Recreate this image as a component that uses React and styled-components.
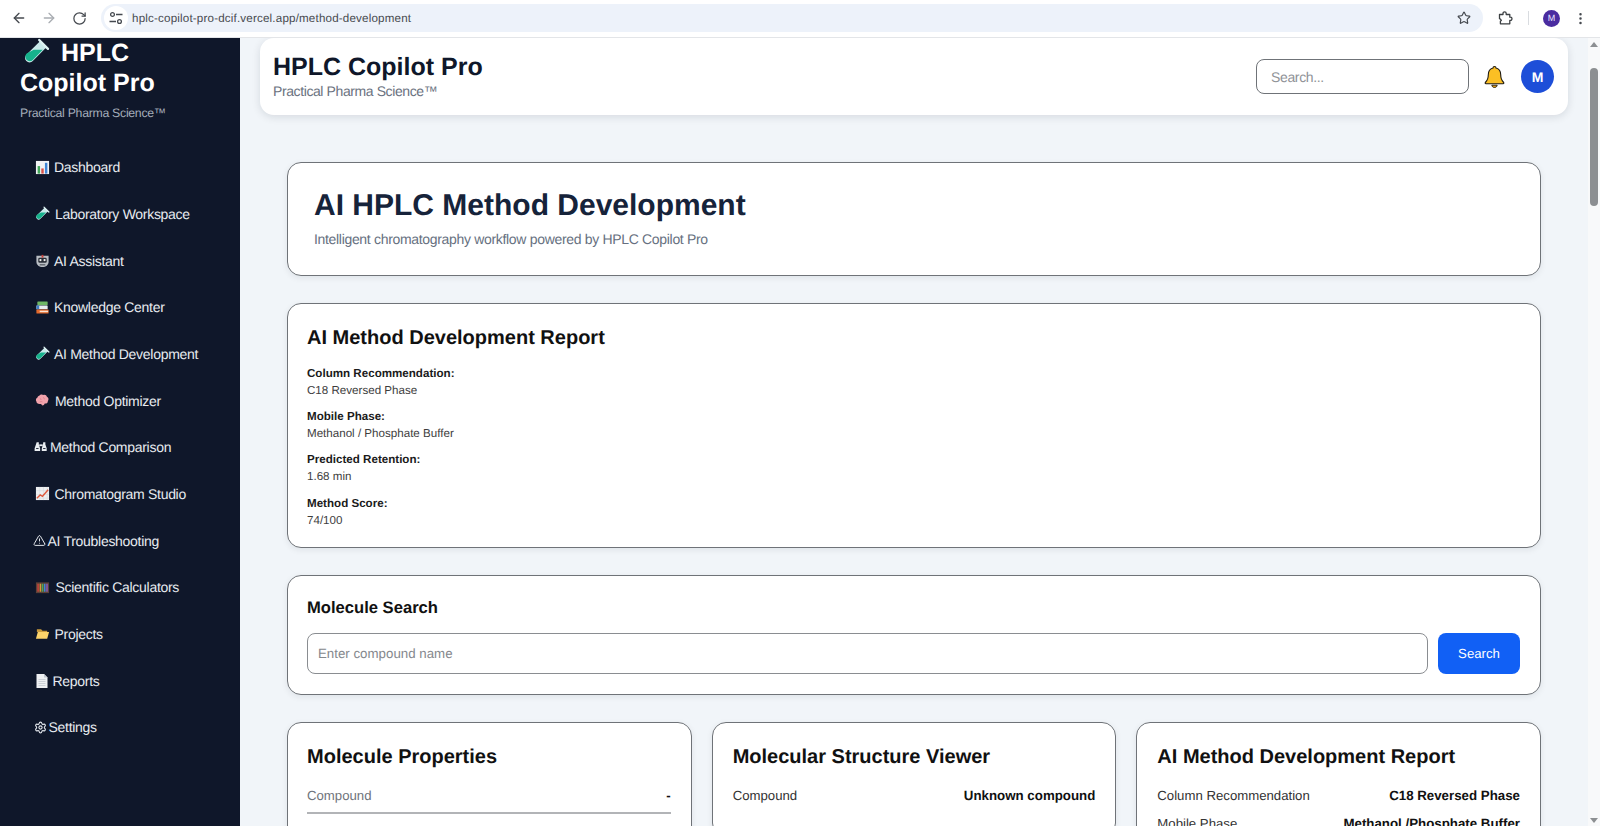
import React from "react";
import styled, { createGlobalStyle } from "styled-components";
import { ArrowLeft, ArrowRight, RotateCw, Star, EllipsisVertical, TriangleAlert, Settings } from "lucide-react";

const GlobalStyle = createGlobalStyle`
  html, body { margin: 0; padding: 0; height: 100%; overflow: hidden; background: #f1f5f9; }
  * { box-sizing: border-box; }
  body, input, button { font-family: "Liberation Sans", Arial, sans-serif; text-rendering: geometricPrecision; }
`;

const Page = styled.div`
  width: 1600px;
  height: 826px;
  display: flex;
  flex-direction: column;
  overflow: hidden;
`;

/* browser toolbar */
const Toolbar = styled.div`
  height: 38px;
  flex: none;
  background: #fff;
  border-bottom: 1px solid #e3e5e8;
  display: flex;
  align-items: center;
  padding: 0 0 1px 4px;
  color: #45494f;
`;
const ToolBtn = styled.div`
  width: ${(p) => p.$w || 30}px;
  display: flex;
  justify-content: center;
  align-items: center;
  color: ${(p) => (p.$faded ? "#a9adb2" : "#45494f")};
`;
const UrlPill = styled.div`
  width: 1382px;
  height: 28px;
  margin-left: 7px;
  margin-right: 7px;
  border-radius: 14px;
  background: #edf2fa;
  display: flex;
  align-items: center;
  padding: 0 12px 0 3px;
`;
const TuneWrap = styled.div`
  width: 24px;
  height: 24px;
  border-radius: 50%;
  background: #fff;
  display: flex;
  align-items: center;
  justify-content: center;
`;
const UrlText = styled.div`
  margin-left: 4px;
  font-size: 11.6px;
  letter-spacing: 0.18px;
  color: #474a4f;
  flex: 1;
`;
const ToolDivider = styled.div`
  width: 1px;
  height: 14px;
  background: #d9dce0;
  margin: 0 11px 0 8px;
`;
const ChromeAvatar = styled.div`
  width: 17px;
  height: 17px;
  border-radius: 50%;
  background: #4a2ca0;
  color: #e9e2ff;
  font-size: 9px;
  display: flex;
  align-items: center;
  justify-content: center;
  margin: 0 5px 0 3px;
`;

const Body = styled.div`
  flex: 1;
  min-height: 0;
  display: flex;
`;

/* left nav */
const Sidebar = styled.aside`
  width: 240px;
  flex: none;
  background: #0f172a;
  color: #fff;
  overflow: hidden;
`;
const Brand = styled.div`
  padding: 0 20px;
  font-size: 25px;
  line-height: 30px;
  font-weight: 700;
`;
const BrandTube = styled.svg`
  width: 27px;
  height: 27px;
  margin: 0 11px 0 3px;
  vertical-align: -4px;
`;
const BrandSub = styled.div`
  padding: 7px 20px 0;
  font-size: 12.3px;
  letter-spacing: -0.29px;
  line-height: 16px;
  color: #a3acb9;
`;
const NavList = styled.nav`
  padding-top: 23px;
`;
const NavItem = styled.div`
  height: 46.67px;
  display: flex;
  align-items: center;
  padding-left: ${(p) => p.$left}px;
  font-size: 14px;
  letter-spacing: -0.29px;
  color: #e7ebf0;
`;
const NavIcon = styled.span`
  width: ${(p) => p.$w}px;
  flex: none;
  display: flex;
  align-items: center;
`;

const Svg = ({ children, size = 15 }) => (
  <svg width={size} height={size} viewBox="0 0 16 16">{children}</svg>
);

const tube = (
  <>
    <path d="M10.2 1.6l4.2 4.2-1.1.3-7.5 7.6a2.6 2.6 0 0 1-3.8-3.8l7.6-7.5z" fill="#c9e9ea" />
    <path d="M6.3 6.9h5.4L5.8 13a2.6 2.6 0 0 1-3.6-3.8z" fill="#16b28c" />
    <path d="M9.6 1.2l5.2 5.2" stroke="#dff3f3" strokeWidth="1.4" strokeLinecap="round" />
  </>
);

const icons = {
  chart: (
    <Svg>
      <rect x="1" y="1" width="14" height="14" fill="#f2f4f5" />
      <rect x="2.8" y="6.5" width="2.6" height="8" fill="#43a85a" />
      <rect x="6.7" y="9" width="2.6" height="5.5" fill="#d9534a" />
      <rect x="10.6" y="3" width="2.6" height="11.5" fill="#3f86d6" />
    </Svg>
  ),
  tube: <Svg>{tube}</Svg>,
  robot: (
    <Svg>
      <path d="M1.5 3h13v6.5c0 3-3 5.5-6.5 5.5s-6.5-2.5-6.5-5.5z" fill="#b9bec4" />
      <rect x="3.5" y="5" width="9" height="5.5" rx="1.5" fill="#2a2f38" />
      <circle cx="5.8" cy="7.5" r="1.2" fill="#f3f3f3" />
      <circle cx="10.2" cy="7.5" r="1.2" fill="#f3f3f3" />
      <rect x="7" y="2" width="2" height="3" fill="#c8443c" />
      <rect x="5" y="12" width="6" height="1.2" fill="#4d535c" />
    </Svg>
  ),
  books: (
    <Svg>
      <rect x="2.5" y="1.5" width="11" height="4" rx="0.6" fill="#6fb765" />
      <rect x="1.5" y="5.8" width="12" height="4" rx="0.6" fill="#e8edf0" />
      <rect x="1.5" y="5.8" width="3" height="4" fill="#3f7fc4" />
      <rect x="1.5" y="10.2" width="13" height="4.3" rx="0.6" fill="#e36a2c" />
      <rect x="5" y="11.4" width="9" height="1.6" fill="#f7e4d5" />
    </Svg>
  ),
  brain: (
    <Svg>
      <path d="M4.5 3c1-1.6 3.2-1.8 4.4-.9 1.8-.6 3.5.5 3.8 2 1.7.7 2.3 3 1 4.6.1 1.8-1.7 3-3.3 2.5-.5 1.3-1.5 2.3-2.5 2.1-.5-1-1.5-1.7-2.7-1.6C3 11.8 1.5 10.5 1.5 9 .5 7.5 1 5.5 2.5 5 2.7 4 3.5 3.2 4.5 3z" fill="#f2a3ac" />
      <path d="M5 5.5c1 .3 1.5 1 1.5 2M9 4.5c0 1 .6 1.7 1.5 2M5 9.5c1-.5 2-.5 3 0" stroke="#d97c88" strokeWidth=".8" fill="none" />
    </Svg>
  ),
  compare: (
    <Svg size={14}>
      <path d="M3 2.5h2.5V5L7 9.5v3H.7v-3L2.2 5z" fill="#e9edf1" />
      <path d="M10.5 2.5H13V5l1.500 4.500v3H8.900v-3L10.300 5z" fill="#e9edf1" />
      <rect x="6" y="5" width="4" height="2" fill="#e9edf1" />
      <rect x="2.4" y="9.3" width="2.8" height="1" fill="#0f172a" />
      <rect x="10.4" y="9.3" width="2.8" height="1" fill="#0f172a" />
    </Svg>
  ),
  line: (
    <Svg>
      <rect x="1" y="1" width="14" height="14" fill="#eef0f1" />
      <path d="M1 5h14M1 9h14M1 13h14M5 1v14M9 1v14M13 1v14" stroke="#cfd4d8" strokeWidth=".5" />
      <path d="M2 13l3.5-3.5 2.5 1.5L14 4" stroke="#de5a3e" strokeWidth="1.5" fill="none" />
    </Svg>
  ),
  warn: <TriangleAlert size={13} strokeWidth={1.8} color="#e7ebf0" />,
  abacus: (
    <Svg>
      <rect x="1" y="2.5" width="14" height="11.5" fill="#5c4238" />
      <rect x="2.5" y="4" width="1.6" height="8.5" fill="#c8443c" />
      <rect x="5" y="4" width="1.6" height="8.5" fill="#d79a3a" />
      <rect x="7.3" y="4" width="1.6" height="8.5" fill="#4aa65a" />
      <rect x="9.6" y="4" width="1.6" height="8.5" fill="#3f86d6" />
      <rect x="12" y="4" width="1.6" height="8.5" fill="#8a5bb8" />
    </Svg>
  ),
  folder: (
    <Svg>
      <path d="M2 3.5h4.5L8 5h5v1.5H2z" fill="#c99a3c" />
      <path d="M3 6.5h12L13 13.500H1z" fill="#fbd26a" />
    </Svg>
  ),
  page: (
    <Svg size={16}>
      <path d="M2.5 1H10l3.5 3.5V15h-11z" fill="#eef0f2" />
      <path d="M10 1v3.5h3.5z" fill="#c3c9cf" />
      <path d="M4.5 6.5h7M4.5 8.5h7M4.5 10.500h7M4.500 12.500h7" stroke="#c3c9cf" strokeWidth=".8" />
    </Svg>
  ),
  gear: <Settings size={13} strokeWidth={2} color="#e7ebf0" />,
};

const navItems = [
  ["chart", "Dashboard", 35, 19],
  ["tube", "Laboratory Workspace", 35, 20],
  ["robot", "AI Assistant", 35, 19],
  ["books", "Knowledge Center", 35, 19],
  ["tube", "AI Method Development", 35, 19],
  ["brain", "Method Optimizer", 35, 20],
  ["compare", "Method Comparison", 34, 16],
  ["line", "Chromatogram Studio", 35, 19.5],
  ["warn", "AI Troubleshooting", 33, 14.5],
  ["abacus", "Scientific Calculators", 35, 20.5],
  ["folder", "Projects", 35, 19.5],
  ["page", "Reports", 34, 18.5],
  ["gear", "Settings", 34, 14.5],
];

/* main area */
const Main = styled.main`
  flex: 1;
  min-width: 0;
  overflow: hidden;
`;
const TopBar = styled.header`
  margin: 0 20px;
  height: 77px;
  background: #fff;
  border-radius: 14px;
  box-shadow: 0 2px 8px rgba(15, 23, 42, 0.12);
  display: flex;
  align-items: center;
  padding: 0 14px 0 13px;
`;
const TopTitle = styled.div`
  flex: 1;
  padding-bottom: 1px;
`;
const TopName = styled.div`
  font-size: 25px;
  line-height: 29px;
  font-weight: 700;
  color: #0f172a;
`;
const TopSub = styled.div`
  font-size: 14px;
  letter-spacing: -0.4px;
  line-height: 18px;
  color: #6b7280;
`;
const TopSearch = styled.input`
  width: 213px;
  height: 35px;
  border: 1px solid #6f7378;
  border-radius: 8px;
  padding: 0 14px;
  font-size: 14px;
  letter-spacing: -0.35px;
  background: #fff;
  &::placeholder { color: #8f9297; opacity: 1; }
`;
const BellWrap = styled.div`
  margin: 0 16px 0 15px;
  display: flex;
`;
const Avatar = styled.div`
  width: 33px;
  height: 33px;
  border-radius: 50%;
  background: #1d4ed8;
  color: #fff;
  font-size: 14px;
  font-weight: 700;
  display: flex;
  align-items: center;
  justify-content: center;
`;
const Content = styled.div`
  padding: 47px 47px;
  display: flex;
  flex-direction: column;
  gap: 27px;
`;
const Card = styled.section`
  background: #fff;
  border: 1px solid #6f7378;
  border-radius: 14px;
  box-shadow: 0 2px 6px rgba(15, 23, 42, 0.08);
  padding: ${(p) => p.$pad || "20px"};
`;
const HeroTitle = styled.h1`
  margin: 0;
  font-size: 30px;
  line-height: 36px;
  font-weight: 700;
  color: #16233a;
`;
const HeroSub = styled.p`
  margin: 6px 0 0;
  font-size: 14px;
  letter-spacing: -0.32px;
  line-height: 18px;
  color: #667080;
`;
const CardTitle = styled.h2`
  margin: 0;
  font-size: 20px;
  line-height: 24px;
  font-weight: 700;
  color: #111;
`;
const ReportList = styled.div`
  margin-top: 15px;
  display: flex;
  flex-direction: column;
  gap: 9.2px;
`;
const ReportLabel = styled.div`
  font-size: 11.6px;
  line-height: 17px;
  font-weight: 700;
  color: #1b1b1b;
`;
const ReportValue = styled.div`
  font-size: 11.6px;
  line-height: 17px;
  color: #3d3d3d;
`;
const SearchTitle = styled.h3`
  margin: 0;
  font-size: 16.6px;
  line-height: 22px;
  font-weight: 700;
  color: #111;
`;
const SearchRow = styled.div`
  margin-top: 14px;
  display: flex;
  gap: 10px;
`;
const SearchInput = styled.input`
  flex: 1;
  height: 41px;
  border: 1px solid #8a8d91;
  border-radius: 8px;
  padding: 0 10px;
  font-size: 13.3px;
  &::placeholder { color: #85888d; opacity: 1; }
`;
const SearchButton = styled.button`
  width: 82px;
  height: 41px;
  border: none;
  border-radius: 8px;
  background: #1160f5;
  color: #fff;
  font-size: 13.2px;
`;
const Columns = styled.div`
  display: grid;
  grid-template-columns: repeat(3, 1fr);
  gap: 20px;
  align-items: start;
`;
const Rows = styled.div`
  margin-top: 18px;
`;
const Row = styled.div`
  display: flex;
  justify-content: space-between;
  font-size: 13.2px;
  line-height: 17px;
  padding-bottom: ${(p) => (p.$ruled ? 8 : 11)}px;
  margin-bottom: ${(p) => (p.$ruled ? 9 : 0)}px;
  border-bottom: ${(p) => (p.$ruled ? "2px solid #b2b4b7" : "none")};
  color: ${(p) => (p.$muted ? "#6f747b" : "#333")};
  b { color: #111; font-size: 13.3px; }
`;

/* page scrollbar */
const ScrollTrack = styled.div`
  width: 12px;
  flex: none;
  background: #f8f9fa;
  display: flex;
  flex-direction: column;
  align-items: center;
  padding: 4px 0 3px 0;
`;
const ScrollThumb = styled.div`
  width: 8px;
  height: 138px;
  margin-top: 21px;
  margin-bottom: auto;
  border-radius: 4px;
  background: #8c8f92;
`;
const ScrollArrow = styled.div`
  width: 0;
  height: 0;
  border-left: 4px solid transparent;
  border-right: 4px solid transparent;
  ${(p) => (p.$down ? "border-top: 5px solid #8c8f92;" : "border-bottom: 5px solid #8c8f92;")}
`;

const Bell = () => (
  <svg width="21" height="24" viewBox="0 0 21 24">
    <path d="M10.5 1.5c.9 0 1.5.6 1.5 1.5 3.2.8 4.7 3.5 4.7 6.8 0 3.5.8 5.6 3 7.7.4.5.1 1.2-.6 1.2H1.9c-.7 0-1-.7-.6-1.2 2.2-2.1 3-4.2 3-7.7C4.3 6.5 5.8 3.8 9 3c0-.9.6-1.5 1.5-1.5z" fill="#fbbf24" stroke="#1f1a10" strokeWidth="1.1" />
    <path d="M7.8 20.2h5.4c-.2 1.4-1.3 2.3-2.7 2.3s-2.5-.9-2.7-2.3z" fill="#e39b12" stroke="#1f1a10" strokeWidth=".9" />
  </svg>
);

const TuneIcon = () => (
  <svg width="16" height="16" viewBox="0 0 16 16" fill="none" stroke="#45494f" strokeWidth="1.3">
    <circle cx="4.5" cy="4.5" r="1.9" />
    <path d="M8 4.5h6.5M1.5 11.5H8" />
    <circle cx="11.5" cy="11.5" r="1.9" />
  </svg>
);

const ExtensionIcon = () => (
  <svg width="16" height="16" viewBox="0 0 16 16" fill="none" stroke="#3c4043" strokeWidth="1.3" strokeLinejoin="round">
    <path d="M2.5 4.5H6V3.4a1.6 1.6 0 0 1 3.2 0v1.100h3.600v2.700h.6a1.600 1.600 0 0 1 0 3.200h-.6v3.400H3.400v-2.600l1-.9-1-1.200-.9-.4z" />
  </svg>
);

const reportItems = [
  ["Column Recommendation:", "C18 Reversed Phase"],
  ["Mobile Phase:", "Methanol / Phosphate Buffer"],
  ["Predicted Retention:", "1.68 min"],
  ["Method Score:", "74/100"],
];

export default function App() {
  return (
    <Page>
      <GlobalStyle />
      <Toolbar>
        <ToolBtn><ArrowLeft size={16} /></ToolBtn>
        <ToolBtn $faded><ArrowRight size={16} /></ToolBtn>
        <ToolBtn><RotateCw size={15} /></ToolBtn>
        <UrlPill>
          <TuneWrap><TuneIcon /></TuneWrap>
          <UrlText>hplc-copilot-pro-dcif.vercel.app/method-development</UrlText>
          <Star size={14} />
        </UrlPill>
        <ToolBtn $w={30}><ExtensionIcon /></ToolBtn>
        <ToolDivider />
        <ChromeAvatar>M</ChromeAvatar>
        <ToolBtn $w={30}><EllipsisVertical size={15} /></ToolBtn>
      </Toolbar>
      <Body>
        <Sidebar>
          <Brand>
            <BrandTube viewBox="0 0 16 16">{tube}</BrandTube>
            HPLC<br />Copilot Pro
          </Brand>
          <BrandSub>Practical Pharma Science™</BrandSub>
          <NavList>
            {navItems.map(([icon, label, left, w]) => (
              <NavItem key={label} $left={left}>
                <NavIcon $w={w}>{icons[icon]}</NavIcon>
                {label}
              </NavItem>
            ))}
          </NavList>
        </Sidebar>
        <Main>
          <TopBar>
            <TopTitle>
              <TopName>HPLC Copilot Pro</TopName>
              <TopSub>Practical Pharma Science™</TopSub>
            </TopTitle>
            <TopSearch placeholder="Search..." />
            <BellWrap><Bell /></BellWrap>
            <Avatar>M</Avatar>
          </TopBar>
          <Content>
            <Card $pad="25px 26px 27px">
              <HeroTitle>AI HPLC Method Development</HeroTitle>
              <HeroSub>Intelligent chromatography workflow powered by HPLC Copilot Pro</HeroSub>
            </Card>
            <Card $pad="22px 19px 18.5px">
              <CardTitle>AI Method Development Report</CardTitle>
              <ReportList>
                {reportItems.map(([label, value]) => (
                  <div key={label}>
                    <ReportLabel>{label}</ReportLabel>
                    <ReportValue>{value}</ReportValue>
                  </div>
                ))}
              </ReportList>
            </Card>
            <Card $pad="21px 20px 20px 19px">
              <SearchTitle>Molecule Search</SearchTitle>
              <SearchRow>
                <SearchInput placeholder="Enter compound name" />
                <SearchButton>Search</SearchButton>
              </SearchRow>
            </Card>
            <Columns>
              <Card $pad="22px 20px 21px 19px">
                <CardTitle>Molecule Properties</CardTitle>
                <Rows>
                  <Row $ruled $muted><span>Compound</span><b>-</b></Row>
                  <Row $ruled $muted><span>Molecular Weight</span><b>-</b></Row>
                </Rows>
              </Card>
              <Card $pad="22px 20px 21px">
                <CardTitle>Molecular Structure Viewer</CardTitle>
                <Rows>
                  <Row><span>Compound</span><b>Unknown compound</b></Row>
                </Rows>
              </Card>
              <Card $pad="22px 20px 21px">
                <CardTitle>AI Method Development Report</CardTitle>
                <Rows>
                  <Row><span>Column Recommendation</span><b>C18 Reversed Phase</b></Row>
                  <Row><span>Mobile Phase</span><b>Methanol /Phosphate Buffer</b></Row>
                </Rows>
              </Card>
            </Columns>
          </Content>
        </Main>
        <ScrollTrack>
          <ScrollArrow />
          <ScrollThumb />
          <ScrollArrow $down />
        </ScrollTrack>
      </Body>
    </Page>
  );
}
